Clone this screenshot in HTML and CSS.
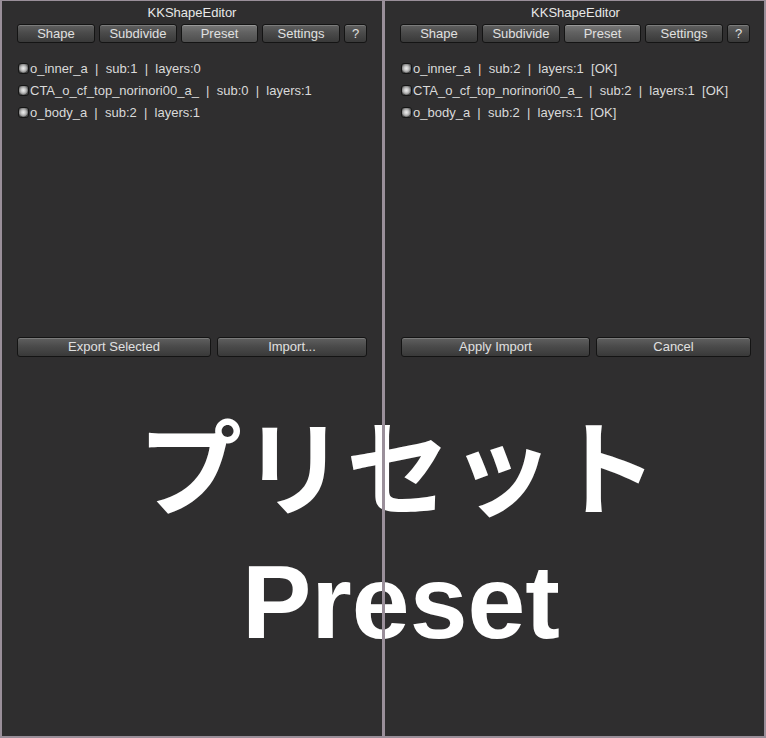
FILE: index.html
```html
<!DOCTYPE html>
<html>
<head>
<meta charset="utf-8">
<link rel="stylesheet" href="styles.css">
</head>
<body>
<div class="window">
  <section class="panel panel-left">
    <div class="title">KKShapeEditor</div>
    <div class="toolbar">
      <button class="btn tab w78">Shape</button>
      <button class="btn tab w78">Subdivide</button>
      <button class="btn tab w77 active">Preset</button>
      <button class="btn tab w78">Settings</button>
      <button class="btn tab w23">?</button>
    </div>
    <div class="list">
      <div class="row"><span class="tog"></span><span class="label">o_inner_a  |  sub:1  |  layers:0</span></div>
      <div class="row"><span class="tog"></span><span class="label">CTA_o_cf_top_norinori00_a_  |  sub:0  |  layers:1</span></div>
      <div class="row"><span class="tog"></span><span class="label">o_body_a  |  sub:2  |  layers:1</span></div>
    </div>
    <div class="actions">
      <button class="btn act w194">Export Selected</button>
      <button class="btn act w150">Import...</button>
    </div>
  </section>
  <section class="panel panel-right">
    <div class="title">KKShapeEditor</div>
    <div class="toolbar">
      <button class="btn tab w78">Shape</button>
      <button class="btn tab w78">Subdivide</button>
      <button class="btn tab w77 active">Preset</button>
      <button class="btn tab w78">Settings</button>
      <button class="btn tab w23">?</button>
    </div>
    <div class="list">
      <div class="row"><span class="tog"></span><span class="label">o_inner_a  |  sub:2  |  layers:1  [OK]</span></div>
      <div class="row"><span class="tog"></span><span class="label">CTA_o_cf_top_norinori00_a_  |  sub:2  |  layers:1  [OK]</span></div>
      <div class="row"><span class="tog"></span><span class="label">o_body_a  |  sub:2  |  layers:1  [OK]</span></div>
    </div>
    <div class="actions actions-right">
      <button class="btn act w189">Apply Import</button>
      <button class="btn act w155">Cancel</button>
    </div>
  </section>
  <div class="caption">
    <div class="caption-jp">プリセット</div>
    <div class="caption-en">Preset</div>
  </div>
  <div class="divider"></div>
</div>
</body>
</html>
```

FILE: styles.css
```css
html, body {
  margin: 0;
  padding: 0;
}
body {
  width: 766px;
  height: 738px;
  overflow: hidden;
  background: #9a8f9a;
  font-family: "Liberation Sans", Arial, sans-serif;
  font-size: 13px;
  color: #dadada;
}
.window {
  position: relative;
  display: flex;
  gap: 3px;
  height: 738px;
  box-sizing: border-box;
  padding: 1px 2px 2px 2px;
}
.panel {
  flex: none;
  background: #2f2e2f;
  display: flex;
  flex-direction: column;
  box-sizing: border-box;
}
.panel-left {
  width: 380px;
  padding: 0 15px;
}
.panel-right {
  width: 379px;
  padding: 0 13px 0 15px;
}
.title {
  height: 23px;
  line-height: 23px;
  text-align: center;
  color: #e8e8e8;
  font-size: 13px;
}
.toolbar {
  display: flex;
  gap: 4px;
  height: 19px;
}
.btn {
  flex: none;
  margin: 0;
  padding: 0;
  font-family: "Liberation Sans", Arial, sans-serif;
  font-size: 13px;
  color: #e0e0e0;
  border: 1px solid #141414;
  border-radius: 3px;
  background: linear-gradient(#606060 0%, #4b4b4b 45%, #393939 100%);
  box-shadow: inset 0 1px 0 rgba(255,255,255,0.18);
  text-align: center;
  box-sizing: border-box;
}
.btn.active {
  background: linear-gradient(#777777 0%, #616161 45%, #4e4e4e 100%);
  box-shadow: inset 0 1px 0 rgba(255,255,255,0.25);
}
.tab {
  height: 19px;
  line-height: 17px;
}
.w78 { width: 78px; }
.w77 { width: 77px; }
.w23 { width: 23px; }
.w194 { width: 194px; }
.w150 { width: 150px; }
.w189 { width: 189px; }
.w155 { width: 155px; }
.list {
  margin-top: 14px;
  height: 280px;
  padding-left: 1px;
}
.row {
  height: 22px;
  display: flex;
  align-items: center;
  gap: 1px;
}
.tog {
  flex: none;
  width: 11px;
  height: 11px;
  box-sizing: border-box;
  border: 1px solid #151515;
  border-radius: 3px;
  background:
    radial-gradient(circle at 48% 48%, #ececec 0, #cfcfcf 1.8px, #a8a8a8 3.2px, #8a8a8a 4px, rgba(0,0,0,0) 4.6px),
    linear-gradient(#6a6a6a, #444444);
}
.label {
  white-space: pre;
  color: #dadada;
}
.actions {
  display: flex;
  gap: 6px;
}
.actions-right {
  padding-left: 1px;
}
.act {
  height: 20px;
  line-height: 18px;
}
.caption {
  position: absolute;
  left: 0;
  top: 393px;
  width: 766px;
  box-sizing: border-box;
  padding-left: 30px;
  text-align: center;
  color: #ffffff;
  z-index: 1;
}
.caption-jp {
  font-family: "Noto Sans CJK JP", "Noto Sans", sans-serif;
  font-weight: 700;
  font-size: 104px;
  line-height: 140px;
}
.caption-en {
  margin-top: 17px;
  padding-left: 6px;
  font-family: "Liberation Sans", Arial, sans-serif;
  font-weight: 700;
  font-size: 104px;
  line-height: 104px;
}
.divider {
  position: absolute;
  left: 382px;
  top: 0;
  width: 3px;
  height: 738px;
  background: #9a8f9a;
  z-index: 2;
}
```
